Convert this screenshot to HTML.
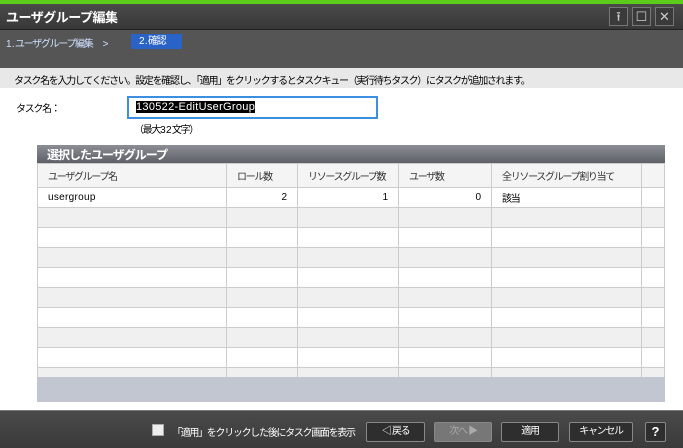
<!DOCTYPE html>
<html><head><meta charset="utf-8"><style>
*{margin:0;padding:0;box-sizing:border-box}
body{width:683px;height:448px;overflow:hidden;font-family:"Liberation Sans","Noto Sans CJK JP",sans-serif;font-size:10px;background:#fff;position:relative;letter-spacing:-1.3px}
.abs{position:absolute}
.lat{letter-spacing:0.3px}
#green{left:0;top:0;width:683px;height:4px;background:#5ccc1a}
#title{left:0;top:4px;width:683px;height:26px;background:linear-gradient(#4a4a4a,#383838);color:#fff;font-size:13px;font-weight:bold;padding:3px 0 0 6px;border-bottom:1px solid #222;letter-spacing:-0.5px}
#crumb{left:0;top:30px;width:683px;height:38px;background:#555}
.wb{top:11px;width:19px;height:19px;border:1px solid #777;background:#3a3a3a;color:#ccc;text-align:center;font-size:13px;line-height:17px;letter-spacing:0}
#instr{left:0;top:68px;width:683px;height:20px;background:#e8e8e8;color:#000;padding:4px 0 0 14px}
table{border-collapse:collapse;position:absolute;left:37px;top:163px;width:628px;table-layout:fixed}
td{border:1px solid #ccc;height:20px;padding:0 10px;font-size:10px;color:#000;white-space:nowrap;overflow:hidden}
tr.h td{background:#f4f4f4;height:24px;color:#333}
tr:nth-child(odd):not(.h) td{background:#f0f0f0}
tr.p td{height:10px;border-bottom:none}
.r{text-align:right;letter-spacing:0}
#footer{left:0;top:410px;width:683px;height:38px;background:linear-gradient(#4a4a4a,#3a3a3a);border-top:1px solid #777}
.btn{top:11px;height:20px;border:1px solid #888;background:#2e2e2e;color:#fff;text-align:center;line-height:18px;font-size:10px;border-radius:2px}
</style></head><body>
<div id="green" class="abs"></div>
<div id="title" class="abs">ユーザグループ編集</div>
<div class="abs wb" style="left:609px;top:7px">⭱</div>
<div class="abs wb" style="left:632px;top:7px">☐</div>
<div class="abs wb" style="left:655px;top:7px">✕</div>
<div id="crumb" class="abs">
 <div class="abs" style="left:6px;top:5px;color:#cfe0ff"><span class="lat">1.</span>ユーザグループ編集　 <span class="lat">&gt;</span></div>
 <div class="abs" style="left:131px;top:4px;width:51px;height:15px;background:#2a63c8;color:#fff;padding-left:8px;line-height:15px"><span class="lat">2.</span>確認</div>
</div>
<div id="instr" class="abs">タスク名を入力してください。設定を確認し、「適用」をクリックするとタスクキュー（実行待ちタスク）にタスクが追加されます。</div>
<div class="abs" style="left:16px;top:100px">タスク名：</div>
<div class="abs" style="left:127px;top:96px;width:251px;height:23px;border:2px solid #3b8ee0;background:#fff;padding:3px 0 0 7px;font-size:11px;letter-spacing:0.3px"><span style="background:#000;color:#fff">130522-EditUserGroup</span></div>
<div class="abs" style="left:134px;top:121px">（最大<span class="lat">32</span>文字）</div>
<div class="abs" style="left:37px;top:145px;width:628px;height:18px;background:linear-gradient(#8c8e96,#5e6068);color:#fff;font-weight:bold;font-size:12px;padding:1px 0 0 10px;letter-spacing:-1px">選択したユーザグループ</div>
<table>
<colgroup><col style="width:189px"><col style="width:71px"><col style="width:101px"><col style="width:93px"><col style="width:150px"><col></colgroup>
<tr class="h"><td>ユーザグループ名</td><td>ロール数</td><td>リソースグループ数</td><td>ユーザ数</td><td>全リソースグループ割り当て</td><td></td></tr>
<tr><td class="lat">usergroup</td><td class="r">2</td><td class="r">1</td><td class="r">0</td><td>該当</td><td></td></tr>
<tr><td></td><td></td><td></td><td></td><td></td><td></td></tr>
<tr><td></td><td></td><td></td><td></td><td></td><td></td></tr>
<tr><td></td><td></td><td></td><td></td><td></td><td></td></tr>
<tr><td></td><td></td><td></td><td></td><td></td><td></td></tr>
<tr><td></td><td></td><td></td><td></td><td></td><td></td></tr>
<tr><td></td><td></td><td></td><td></td><td></td><td></td></tr>
<tr><td></td><td></td><td></td><td></td><td></td><td></td></tr>
<tr><td></td><td></td><td></td><td></td><td></td><td></td></tr>
<tr class="p"><td></td><td></td><td></td><td></td><td></td><td></td></tr>
</table>
<div class="abs" style="left:37px;top:377px;width:628px;height:25px;background:#c2c6d0"></div>
<div id="footer" class="abs">
 <div class="abs" style="left:152px;top:13px;width:12px;height:12px;background:#eee;border:1px solid #aaa"></div>
 <div class="abs" style="left:172px;top:13px;color:#fff">「適用」をクリックした後にタスク画面を表示</div>
 <div class="abs btn" style="left:366px;width:59px">◁ 戻る</div>
 <div class="abs btn" style="left:434px;width:58px;background:#777;border-color:#888;color:#aaa">次へ ▶</div>
 <div class="abs btn" style="left:501px;width:58px">適用</div>
 <div class="abs btn" style="left:569px;width:64px">キャンセル</div>
 <div class="abs btn" style="left:645px;width:21px;font-weight:bold;font-size:13px;letter-spacing:0">?</div>
</div>
</body></html>
